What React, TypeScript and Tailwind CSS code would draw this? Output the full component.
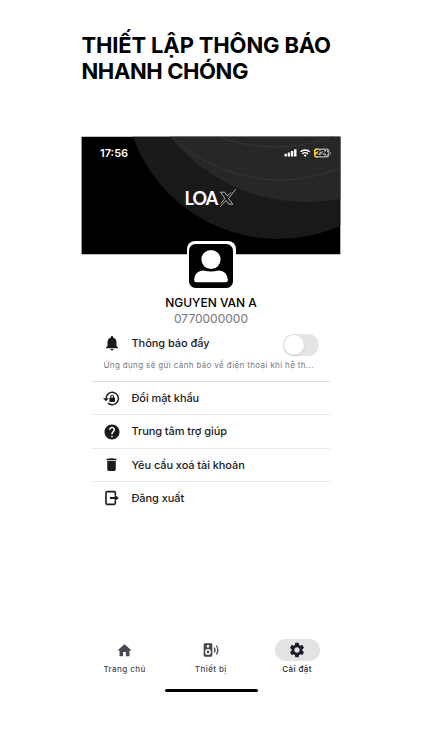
import React from 'react';
import { MdDelete, MdHelp, MdHome, MdNotifications, MdSettings } from 'react-icons/md';
import { clsx } from 'clsx';

const LockResetIcon = ({ className }: { className?: string }) => (
  <svg viewBox="0 0 24 24" fill="currentColor" className={className}>
    <path
      d="M4.200 12a8.800 8.800 0 1 1 2.800 6.400"
      fill="none"
      stroke="currentColor"
      strokeWidth="2.100"
    />
    <path d="M0 11.500h8.400L4.200 16Z" />
    <path
      fillRule="evenodd"
      d="M10.300 10.500V9.300a2.700 2.700 0 0 1 5.400 0v1.200h.3a1 1 0 0 1 1 1V16a1 1 0 0 1-1 1h-6a1 1 0 0 1-1-1v-4.500a1 1 0 0 1 1-1Zm1.400 0h2.600V9.300a1.300 1.300 0 0 0-2.600 0Z"
    />
  </svg>
);

const LogoutIcon = ({ className }: { className?: string }) => (
  <svg viewBox="0 0 24 24" className={className}>
    <path
      d="M17 7.500V4a1.500 1.500 0 0 0-1.500-1.500h-11A1.500 1.500 0 0 0 3 4v16a1.500 1.500 0 0 0 1.500 1.500h11A1.500 1.500 0 0 0 17 20v-3.500"
      fill="none"
      stroke="currentColor"
      strokeWidth="2.400"
    />
    <path d="M9 10.600h7V6.900l6.200 5.100-6.200 5.100v-3.700H9Z" fill="currentColor" />
  </svg>
);

const SpeakerIcon = ({ className }: { className?: string }) => (
  <svg viewBox="0 0 24 24" fill="currentColor" className={className}>
    <path
      fillRule="evenodd"
      d="M3 2h9a2 2 0 0 1 2 2v16a2 2 0 0 1-2 2H3a2 2 0 0 1-2-2V4a2 2 0 0 1 2-2Zm4.500 2.500a2 2 0 1 0 0 4 2 2 0 0 0 0-4Zm0 6a4.400 4.400 0 1 0 0 8.800 4.400 4.400 0 0 0 0-8.800Zm0 2.400a2 2 0 1 1 0 4 2 2 0 0 1 0-4Z"
    />
    <path
      d="M16.500 8.500a5 5 0 0 1 0 7M19.700 5.500a9.200 9.200 0 0 1 0 13"
      fill="none"
      stroke="currentColor"
      strokeWidth="1.900"
    />
  </svg>
);

const HeaderArt = () => (
  <svg width="260" height="119" viewBox="81 136 260 119" className="block">
    <defs>
      <clipPath id="header-clip">
        <rect x="81.600" y="136.800" width="258.700" height="117.400" />
      </clipPath>
    </defs>
    <g clipPath="url(#header-clip)">
      <rect x="81" y="136" width="260" height="119" fill="#000" />
      <circle cx="278" cy="85" r="154" fill="#191919" />
      <circle cx="306" cy="28" r="174" fill="#272727" />
      <circle cx="280" cy="23" r="157" fill="none" stroke="#3a3a3a" strokeWidth="0.8" />
      <circle cx="275" cy="-15" r="162" fill="none" stroke="#3a3a3a" strokeWidth="0.8" />
    </g>
  </svg>
);

const StatusIcons = () => (
  <div className="relative w-[48px] h-[12px]">
    <svg width="48" height="12" viewBox="0 0 48 12">
      <g fill="#fff">
        <rect x="0.5" y="6.700" width="2.400" height="2.900" rx="0.5" />
        <rect x="3.700" y="5.400" width="2.400" height="4.200" rx="0.5" />
        <rect x="6.900" y="3.900" width="2.400" height="5.700" rx="0.5" />
        <rect x="10.100" y="2.300" width="2.400" height="7.300" rx="0.5" />
      </g>
      <g fill="none" stroke="#fff" strokeWidth="1.500">
        <path d="M16.600 4.800a6.600 6.600 0 0 1 9.200 0" />
        <path d="M18.400 6.900a4 4 0 0 1 5.600 0" />
      </g>
      <path d="m21.200 9.900-1.500-1.600a2.200 2.200 0 0 1 3 0Z" fill="#fff" />
      <rect x="30" y="1.600" width="15.400" height="8.800" rx="2.600" fill="#a3a3a3" />
      <path d="M34 1.600h-1.400A2.600 2.600 0 0 0 30 4.200v3.600a2.600 2.600 0 0 0 2.600 2.600H34Z" fill="#fccb1a" />
      <path d="M46.200 4.700v2.800q.9-.4.9-1.400t-.9-1.400Z" fill="#a3a3a3" />
      <path d="m43.200 2.500-2.900 4h1.900l-.6 3.200 2.900-4.200h-1.900Z" fill="#000" />
    </svg>
    <span className="absolute left-[31px] top-0 text-[8px] leading-[12px] font-bold tracking-[-0.4px] text-black">
      22
    </span>
  </div>
);

const Logo = () => (
  <div className="flex items-center h-[22px] text-white">
    <span className="w-[32px] -ml-px mr-px text-[18px] leading-[22px] font-bold tracking-[-0.9px] whitespace-nowrap font-['Lato',sans-serif]">
      LOA
    </span>
    <svg width="19" height="20" viewBox="0 0 19 20" fill="none" stroke="#d6d6d6" strokeWidth="0.8">
      <path d="M17.800 1 10.500 10.500l4.300 5.700h-4L8.200 12.500 2 18.500M2.500 4.200h4L9.300 8l3.500-3.600M2.500 4.200l4.500 6.200-4 5" />
    </svg>
  </div>
);

interface MenuItemProps {
  icon: React.ReactNode;
  label: string;
  last?: boolean;
}

const MenuItem = ({ icon, label, last }: MenuItemProps) => (
  <div
    className={clsx(
      'flex items-center pl-[11.5px] gap-[12px] text-[#1b1b1f]',
      last ? 'h-[32.4px]' : 'h-[33.4px] border-b border-[#e9e9ea]'
    )}
  >
    <span className="flex items-center justify-center w-4 h-4">{icon}</span>
    <span className="text-[11px] font-medium tracking-[-0.08px] whitespace-nowrap">{label}</span>
  </div>
);

interface NavItemProps {
  icon: React.ReactNode;
  label: string;
  active?: boolean;
}

const NavItem = ({ icon, label, active }: NavItemProps) => (
  <div className="flex flex-col items-center w-[86.3px] text-[#46464f]">
    <span
      className={clsx(
        'flex items-center justify-center w-[45px] h-[22px] rounded-full',
        active && 'bg-[#e3e3e4] text-[#1a1a2c]'
      )}
    >
      {icon}
    </span>
    <span
      className={clsx(
        'mt-[2px] text-[8px] leading-[12px] font-medium tracking-[0.42px] whitespace-nowrap',
        active && 'text-[#1b1b1f]'
      )}
    >
      {label}
    </span>
  </div>
);

export default function App() {
  return (
    <div className="w-[422px] h-[750px] bg-white overflow-hidden font-['Inter','Noto_Sans',sans-serif] text-black">
      <h1 className="pt-[32px] pl-[81.5px] h-[136px] text-[22px] leading-[26px] font-bold tracking-[-0.160px]">
        THIẾT LẬP THÔNG BÁO
        <br />
        <span className="tracking-[-0.400px]">NHANH CHÓNG</span>
      </h1>

      <div className="w-[260px] ml-[81px] flex flex-col">
        <header className="relative h-[119px]">
          <HeaderArt />
          <div className="absolute inset-0">
            <div className="flex items-center justify-between pt-[9px] pl-[19px] pr-[9px] text-white">
              <span className="text-[11px] leading-[16px] font-semibold">17:56</span>
              <StatusIcons />
            </div>
            <div className="flex justify-center mt-[26px]">
              <Logo />
            </div>
          </div>
        </header>

        <section className="relative flex flex-col items-center -mt-[14px]">
          <div className="w-[49px] h-[49px] p-[2.5px] bg-white rounded-[8px]">
            <svg width="44" height="44" viewBox="0 0 44 44">
              <rect width="44" height="44" rx="6.500" fill="#000" />
              <circle cx="22" cy="15.500" r="9.600" fill="#fff" />
              <path d="M5.200 36.500c0-6.500 4-10 9.300-10q7.500 2.200 15 0c5.300 0 9.300 3.500 9.300 10q0 1.800-1.800 1.800H7q-1.800 0-1.800-1.800Z" fill="#fff" />
            </svg>
          </div>
          <p className="mt-[4px] text-[12px] leading-[17px] font-medium">NGUYEN VAN A</p>
          <p className="text-[12px] leading-[16px] text-[#77777a]">0770000000</p>
        </section>

        <section className="mx-[11px] flex flex-col">
          <div className="h-[55px] border-b border-[#dededf]">
            <div className="flex items-center h-[32px] pl-[11.5px] pr-[11px] gap-[12px] text-[#1b1b1f]">
              <MdNotifications className="w-[18px] h-[18px] -ml-px -mr-px" />
              <span className="text-[11px] font-medium flex-1 tracking-[-0.06px]">Thông báo đẩy</span>
              <span className="flex items-center w-[36px] h-[22px] mt-[4px] rounded-full bg-[#e5e5e6] px-px">
                <span className="w-5 h-5 rounded-full bg-white shadow-sm" />
              </span>
            </div>
            <p className="pl-[11.5px] text-[8px] leading-[12px] tracking-[0.360px] text-[#777784] whitespace-nowrap">
              Ứng dụng sẽ gửi cảnh báo về điện thoại khi hệ th...
            </p>
          </div>
          <MenuItem icon={<LockResetIcon className="w-[17px] h-[17px] shrink-0" />} label="Đổi mật khẩu" />
          <MenuItem icon={<MdHelp className="w-[18px] h-[18px] shrink-0" />} label="Trung tâm trợ giúp" />
          <MenuItem icon={<MdDelete className="w-[17px] h-[17px] shrink-0" />} label="Yêu cầu xoá tài khoản" />
          <MenuItem icon={<LogoutIcon className="w-4 h-4" />} label="Đăng xuất" last />
        </section>

        <nav className="flex mt-[124.6px] pl-[0.4px]">
          <NavItem icon={<MdHome className="w-[17px] h-[17px]" />} label="Trang chủ" />
          <NavItem icon={<SpeakerIcon className="w-4 h-4" />} label="Thiết bị" />
          <NavItem icon={<MdSettings className="w-[18px] h-[18px]" />} label="Cài đặt" active />
        </nav>
        <div className="self-center w-[93px] h-[3px] mt-[13.5px] rounded-full bg-black" />
      </div>
    </div>
  );
}
